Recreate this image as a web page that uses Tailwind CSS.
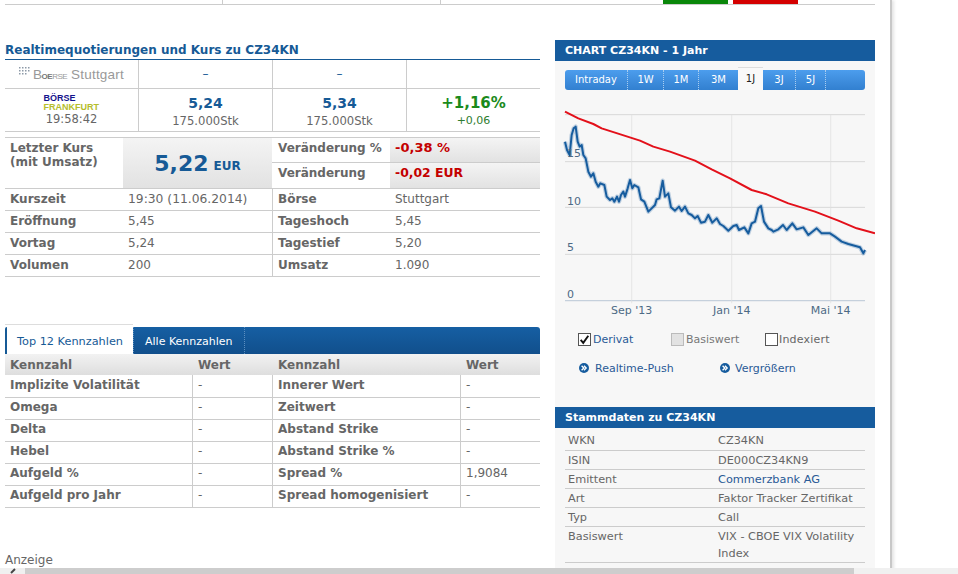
<!DOCTYPE html>
<html lang="de">
<head>
<meta charset="utf-8">
<script src="https://cdn.jsdelivr.net/npm/@tailwindcss/browser@4"></script>
</head>
<body class="bg-white">
<div class="relative w-[958px] h-[574px] overflow-hidden bg-white font-['DejaVu_Sans',Verdana,sans-serif] text-[12px] leading-none text-[#666]">
  <div class="w-[892px] h-[574px] border-r-[2px] border-[#c8c8c8] shadow-[2px_0_3px_#e4e4e4] pl-[5px] pr-[15px]">
    <!-- top strip -->
    <div class="w-[870px] h-[5px] border-b border-[#ccc] flex">
      <div class="w-[217px] h-full"></div>
      <div class="w-[218px] h-full border-l border-[#ccc]"></div>
      <div class="w-[218px] h-full border-l border-[#ccc]"></div>
      <div class="h-[4px] w-[65px] bg-[#0a870a] ml-[5px]"></div>
      <div class="h-[4px] w-[65px] bg-[#d40000] ml-[5px]"></div>
    </div>
    <div class="flex mt-[35px] gap-[15px] items-start">
      <!-- left column -->
      <div class="w-[535px]">
        <h2 class="h-[20px] pt-[4px] font-bold text-[12px] text-[#165a96] border-b-[1px] border-[#165a96]">Realtimequotierungen und Kurs zu CZ34KN</h2>
        <div class="grid grid-cols-[133px_134px_134px_134px] border-b border-[#ccc]">
          <div class="h-[29px] border-b border-[#ccc] flex items-center justify-center gap-[3px]">
            <svg width="11" height="10" viewBox="0 0 11 10" class="mb-[4px]"><g fill="#8d9aa8"><rect x="0" y="0" width="1.5" height="1.5"/><rect x="3" y="0" width="1.5" height="1.5"/><rect x="6" y="0" width="1.5" height="1.5"/><rect x="9" y="0" width="1.5" height="1.5"/><rect x="0" y="3" width="1.5" height="1.5"/><rect x="3" y="3" width="1.5" height="1.5"/><rect x="6" y="3" width="1.5" height="1.5"/><rect x="9" y="3" width="1.5" height="1.5"/><rect x="0" y="6" width="1.5" height="1.5"/><rect x="3" y="6" width="1.5" height="1.5"/><rect x="6" y="6" width="1.5" height="1.5"/></g></svg>
            <span class="font-['Liberation_Sans',sans-serif] text-[13.5px] tracking-[0.2px] text-[#999] mt-[2px]"><span class="tracking-[-0.5px]">B<span class="font-bold text-[8px] text-[#777]">OE</span><span class="text-[8px]">RSE</span></span> Stuttgart</span>
          </div>
          <div class="h-[29px] border-b border-l border-[#ccc] flex items-center justify-center text-[#165a96]">–</div>
          <div class="h-[29px] border-b border-l border-[#ccc] flex items-center justify-center text-[#165a96]">–</div>
          <div class="h-[29px] border-b border-l border-[#ccc]"></div>
          <div class="h-[42px] flex flex-col items-center pt-[5px]">
            <span class="font-['Liberation_Sans',sans-serif] font-bold text-[9px] leading-[9px] text-[#15128c] w-[56px]">BÖRSE</span>
            <span class="font-['Liberation_Sans',sans-serif] font-bold text-[9px] leading-[9px] text-[#b5bd2c] w-[56px]">FRANKFURT</span>
            <span class="mt-[1px] text-[11.5px] leading-[12px]">19:58:42</span>
          </div>
          <div class="h-[42px] border-l border-[#ccc] flex flex-col items-center pt-[7px]">
            <span class="font-bold text-[14px] text-[#165a96]">5,24</span>
            <span class="mt-[5px] text-[11.6px] leading-[12px]">175.000Stk</span>
          </div>
          <div class="h-[42px] border-l border-[#ccc] flex flex-col items-center pt-[7px]">
            <span class="font-bold text-[14px] text-[#165a96]">5,34</span>
            <span class="mt-[5px] text-[11.6px] leading-[12px]">175.000Stk</span>
          </div>
          <div class="h-[42px] border-l border-[#ccc] flex flex-col items-center pt-[7px]">
            <span class="font-bold text-[15px] leading-[14px] text-[#1b8a1b]">+1,16%</span>
            <span class="mt-[5px] text-[11px] leading-[12px] text-[#2f7d2f]">+0,06</span>
          </div>
        </div>
        <!-- Letzter Kurs -->
        <div class="mt-[5px] border-t border-b border-[#ccc] grid grid-cols-[118px_149px_118px_150px] h-[52px]">
          <div class="pl-[5px] pt-[3px] font-bold text-[#666] leading-[14px]">Letzter Kurs<br>(mit Umsatz)</div>
          <div class="bg-gradient-to-b from-[#f4f4f4] to-[#e2e2e2] flex items-center justify-center gap-[5px] pt-[2px]">
            <span class="font-bold text-[22px] text-[#165a96]">5,22</span>
            <span class="font-bold text-[12px] text-[#165a96] mt-[4px]">EUR</span>
          </div>
          <div class="flex flex-col">
            <div class="h-[25px] pl-[6px] pt-[4px] font-bold border-b border-[#ccc]">Veränderung %</div>
            <div class="pl-[6px] pt-[4px] font-bold">Veränderung</div>
          </div>
          <div class="flex flex-col">
            <div class="h-[25px] pl-[5px] pt-[4px] font-bold text-[13px] leading-[12px] text-[#c40000] bg-gradient-to-b from-[#f4f4f4] to-[#e2e2e2] border-b border-[#ccc]">-0,38 %</div>
            <div class="flex-1 pl-[5px] pt-[4px] font-bold text-[12.4px] leading-[12px] text-[#c40000] bg-gradient-to-b from-[#f4f4f4] to-[#e2e2e2]">-0,02 EUR</div>
          </div>
        </div>
        <div class="grid grid-cols-[118px_150px_117px_150px] auto-rows-[22px] items-stretch">
          <div class="pl-[5px] pt-[4px] font-bold border-b border-[#ccc]">Kurszeit</div><div class="pl-[5px] pt-[4px] border-b border-r border-[#ccc] text-[12.3px]">19:30 (11.06.2014)</div><div class="pl-[5px] pt-[4px] font-bold border-b border-[#ccc]">Börse</div><div class="pl-[5px] pt-[4px] border-b border-[#ccc]">Stuttgart</div>
          <div class="pl-[5px] pt-[4px] font-bold border-b border-[#ccc]">Eröffnung</div><div class="pl-[5px] pt-[4px] border-b border-r border-[#ccc]">5,45</div><div class="pl-[5px] pt-[4px] font-bold border-b border-[#ccc]">Tageshoch</div><div class="pl-[5px] pt-[4px] border-b border-[#ccc]">5,45</div>
          <div class="pl-[5px] pt-[4px] font-bold border-b border-[#ccc]">Vortag</div><div class="pl-[5px] pt-[4px] border-b border-r border-[#ccc]">5,24</div><div class="pl-[5px] pt-[4px] font-bold border-b border-[#ccc]">Tagestief</div><div class="pl-[5px] pt-[4px] border-b border-[#ccc]">5,20</div>
          <div class="pl-[5px] pt-[4px] font-bold border-b border-[#ccc]">Volumen</div><div class="pl-[5px] pt-[4px] border-b border-r border-[#ccc]">200</div><div class="pl-[5px] pt-[4px] font-bold border-b border-[#ccc]">Umsatz</div><div class="pl-[5px] pt-[4px] border-b border-[#ccc]">1.090</div>
        </div>
        <!-- Kennzahlen tabs -->
        <div class="mt-[47px] h-[30px] flex text-[11.3px]">
          <div class="w-[128px] h-full bg-white border-t border-[#ddd] flex items-end">
            <div class="w-full h-[27px] border-l-[2px] border-[#165a96] rounded-tl-[2px] flex items-center pl-[10px] pt-[2px] text-[#165a96]">Top 12 Kennzahlen</div>
          </div>
          <div class="flex-1 mt-[3px] h-[27px] bg-gradient-to-b from-[#165fa3] to-[#114f8c] rounded-tr-[3px] flex items-center text-white text-[11px]">
            <span class="h-full flex items-center px-[11px] pt-[2px] border-r border-l border-dotted border-[#5c8fc0]">Alle Kennzahlen</span>
          </div>
        </div>
        <div class="grid grid-cols-[188px_80px_188px_79px] auto-rows-[22px]">
          <div class="h-[21px] pl-[5px] pt-[5px] font-bold bg-gradient-to-b from-[#f2f2f2] to-[#dedede]">Kennzahl</div><div class="h-[21px] pl-[5px] pt-[5px] font-bold bg-gradient-to-b from-[#f2f2f2] to-[#dedede]">Wert</div><div class="h-[21px] pl-[5px] pt-[5px] font-bold bg-gradient-to-b from-[#f2f2f2] to-[#dedede]">Kennzahl</div><div class="h-[21px] pl-[5px] pt-[5px] font-bold bg-gradient-to-b from-[#f2f2f2] to-[#dedede]">Wert</div>
          <div class="-mt-[1px] pl-[5px] pt-[4px] font-bold border-b border-r border-[#ccc]">Implizite Volatilität</div><div class="-mt-[1px] pl-[5px] pt-[4px] border-b border-r border-[#ccc]">-</div><div class="-mt-[1px] pl-[5px] pt-[4px] font-bold border-b border-r border-[#ccc]">Innerer Wert</div><div class="-mt-[1px] pl-[5px] pt-[4px] border-b border-[#ccc]">-</div>
          <div class="-mt-[1px] pl-[5px] pt-[4px] font-bold border-b border-r border-[#ccc]">Omega</div><div class="-mt-[1px] pl-[5px] pt-[4px] border-b border-r border-[#ccc]">-</div><div class="-mt-[1px] pl-[5px] pt-[4px] font-bold border-b border-r border-[#ccc]">Zeitwert</div><div class="-mt-[1px] pl-[5px] pt-[4px] border-b border-[#ccc]">-</div>
          <div class="-mt-[1px] pl-[5px] pt-[4px] font-bold border-b border-r border-[#ccc]">Delta</div><div class="-mt-[1px] pl-[5px] pt-[4px] border-b border-r border-[#ccc]">-</div><div class="-mt-[1px] pl-[5px] pt-[4px] font-bold border-b border-r border-[#ccc]">Abstand Strike</div><div class="-mt-[1px] pl-[5px] pt-[4px] border-b border-[#ccc]">-</div>
          <div class="-mt-[1px] pl-[5px] pt-[4px] font-bold border-b border-r border-[#ccc]">Hebel</div><div class="-mt-[1px] pl-[5px] pt-[4px] border-b border-r border-[#ccc]">-</div><div class="-mt-[1px] pl-[5px] pt-[4px] font-bold border-b border-r border-[#ccc]">Abstand Strike %</div><div class="-mt-[1px] pl-[5px] pt-[4px] border-b border-[#ccc]">-</div>
          <div class="-mt-[1px] pl-[5px] pt-[4px] font-bold border-b border-r border-[#ccc]">Aufgeld %</div><div class="-mt-[1px] pl-[5px] pt-[4px] border-b border-r border-[#ccc]">-</div><div class="-mt-[1px] pl-[5px] pt-[4px] font-bold border-b border-r border-[#ccc]">Spread %</div><div class="-mt-[1px] pl-[5px] pt-[4px] border-b border-[#ccc]">1,9084</div>
          <div class="-mt-[1px] pl-[5px] pt-[4px] font-bold border-b border-r border-[#ccc]">Aufgeld pro Jahr</div><div class="-mt-[1px] pl-[5px] pt-[4px] border-b border-r border-[#ccc]">-</div><div class="-mt-[1px] pl-[5px] pt-[4px] font-bold border-b border-r border-[#ccc]">Spread homogenisiert</div><div class="-mt-[1px] pl-[5px] pt-[4px] border-b border-[#ccc]">-</div>
        </div>
        <div class="mt-[46px]">Anzeige</div>
      </div>
      <!-- right column -->
      <div class="w-[320px]">
        <div class="h-[21px] bg-[#165c9e] text-white font-bold text-[11px] flex items-center pl-[10px]">CHART CZ34KN - 1 Jahr</div>
        <div class="h-[346px] bg-[#f7f7f7] pt-[6px]">
          <div class="relative mx-[10px] h-[23px]">
            <div class="mt-[3px] h-[20px] w-[300px] rounded-[3px] flex items-center text-white text-[10px] bg-gradient-to-b from-[#4c9ded] to-[#3280d0]">
              <span class="w-[63px] text-center border-r border-dotted border-[#a9cdf0] h-full flex items-center justify-center">Intraday</span>
              <span class="w-[36px] border-r border-dotted border-[#a9cdf0] h-full flex items-center justify-center">1W</span>
              <span class="w-[35px] border-r border-dotted border-[#a9cdf0] h-full flex items-center justify-center">1M</span>
              <span class="w-[39px] h-full flex items-center justify-center">3M</span>
              <span class="w-[25px] h-[23px] -mt-[3px] bg-[#f9f9f9] border-t border-[#ddd] text-[#222] flex items-center justify-center">1J</span>
              <span class="w-[33px] border-r border-dotted border-[#a9cdf0] h-full flex items-center justify-center">3J</span>
              <span class="w-[30px] border-r border-dotted border-[#a9cdf0] h-full flex items-center justify-center">5J</span>
            </div>
          </div>
          <svg width="320" height="220" viewBox="0 0 960 660" class="block mt-[7px]">
            <g stroke="#d8d8d8" stroke-width="3" fill="none">
              <path d="M30 44H930M30 185H930M30 322H930M30 463H930" />
              <path d="M30 602H930" stroke="#c5d0dc" stroke-width="4"/>
              <path d="M230 44V610M530 44V610M827 44V610" stroke-width="2" stroke="#e0e0e0"/>
            </g>
            <polyline fill="none" stroke="#165c9e" stroke-opacity="0.25" stroke-width="13" stroke-linejoin="round" points="30,125 36,150 44,165 50,105 56,85 62,80 68,125 74,140 80,135 85,165 92,175 100,215 108,230 115,220 122,245 130,260 136,250 148,255 155,290 165,300 172,295 178,305 186,290 192,305 198,285 205,275 210,290 218,265 225,240 232,265 238,255 250,262 258,298 268,305 280,335 290,325 300,315 305,298 313,295 323,242 330,290 340,280 348,322 360,332 372,320 380,333 390,320 400,340 410,345 420,355 428,348 438,368 450,365 460,345 472,368 485,355 495,372 505,378 520,392 535,378 545,375 552,390 568,382 580,400 590,370 600,365 610,325 618,318 627,365 640,385 650,390 655,395 670,388 684,375 695,390 712,370 725,388 745,382 760,405 785,385 800,400 825,400 840,410 860,425 880,432 915,442 925,460 930,450"/>
            <polyline fill="none" stroke="#165c9e" stroke-width="6" stroke-linejoin="round" points="30,125 36,150 44,165 50,105 56,85 62,80 68,125 74,140 80,135 85,165 92,175 100,215 108,230 115,220 122,245 130,260 136,250 148,255 155,290 165,300 172,295 178,305 186,290 192,305 198,285 205,275 210,290 218,265 225,240 232,265 238,255 250,262 258,298 268,305 280,335 290,325 300,315 305,298 313,295 323,242 330,290 340,280 348,322 360,332 372,320 380,333 390,320 400,340 410,345 420,355 428,348 438,368 450,365 460,345 472,368 485,355 495,372 505,378 520,392 535,378 545,375 552,390 568,382 580,400 590,370 600,365 610,325 618,318 627,365 640,385 650,390 655,395 670,388 684,375 695,390 712,370 725,388 745,382 760,405 785,385 800,400 825,400 840,410 860,425 880,432 915,442 925,460 930,450"/>
            <polyline fill="none" stroke="#e3101a" stroke-width="6" stroke-linejoin="round" points="30,35 70,55 115,72 140,85 180,98 255,122 295,140 345,155 420,182 470,208 525,235 590,270 635,283 700,310 780,335 850,362 905,385 960,400"/>
            <g font-family="DejaVu Sans, sans-serif" font-size="33" fill="#4d6a85">
              <text x="36" y="172">15</text>
              <text x="36" y="314">10</text>
              <text x="36" y="454">5</text>
              <text x="36" y="594">0</text>
            </g>
            <g font-family="DejaVu Sans, sans-serif" font-size="33" fill="#4d6a85" text-anchor="middle">
              <text x="230" y="642">Sep '13</text>
              <text x="530" y="642">Jan '14</text>
              <text x="827" y="642">Mai '14</text>
            </g>
          </svg>
          <div class="mt-[11px] pl-[23px] flex items-center h-[16px] text-[11px]">
            <span class="w-[13px] h-[13px] border border-[#555] bg-white flex items-center justify-center">
              <svg width="13" height="13" viewBox="0 0 13 13"><path d="M2 7l3 3.5L11 2" stroke="#111" stroke-width="2.2" fill="none"/></svg>
            </span>
            <span class="text-[#2a5a96] ml-[2px] w-[41px]">Derivat</span>
            <span class="w-[13px] h-[13px] border border-[#bbb] bg-[#e2e2e2] ml-[37px]"></span>
            <span class="ml-[2px] text-[#777] w-[54px]">Basiswert</span>
            <span class="w-[13px] h-[13px] border border-[#555] bg-white ml-[25px]"></span>
            <span class="ml-[1px] text-[#666] tracking-[0.2px]">Indexiert</span>
          </div>
          <div class="mt-[13px] pl-[24px] flex items-center h-[16px] text-[#2a5a96] text-[11px]">
            <svg width="10" height="10" viewBox="0 0 10 10"><circle cx="5" cy="5" r="5" fill="#165c9e"/><path d="M2.6 2.8L4.8 5 2.6 7.2M5 2.8L7.2 5 5 7.2" stroke="#fff" stroke-width="1.3" fill="none"/></svg>
            <span class="ml-[6px] w-[80px]">Realtime-Push</span>
            <svg width="10" height="10" viewBox="0 0 10 10" class="ml-[45px]"><circle cx="5" cy="5" r="5" fill="#165c9e"/><path d="M2.6 2.8L4.8 5 2.6 7.2M5 2.8L7.2 5 5 7.2" stroke="#fff" stroke-width="1.3" fill="none"/></svg>
            <span class="ml-[5px]">Vergrößern</span>
          </div>
        </div>
        <div class="h-[21px] bg-[#165c9e] text-white font-bold text-[11px] flex items-center pl-[10px]">Stammdaten zu CZ34KN</div>
        <div class="bg-[#f7f7f7] h-[150px] px-[10px] pt-[4px] text-[11.3px]">
          <div class="grid grid-cols-[153px_147px] auto-rows-[19px]">
            <div class="pl-[3px] pt-[3px] border-b border-[#ccc]">WKN</div><div class="pt-[3px] border-b border-[#ccc]">CZ34KN</div>
            <div class="pl-[3px] pt-[4px] border-b border-[#ccc]">ISIN</div><div class="pt-[4px] border-b border-[#ccc]">DE000CZ34KN9</div>
            <div class="pl-[3px] pt-[4px] border-b border-[#ccc]">Emittent</div><div class="pt-[4px] border-b border-[#ccc] text-[#2a5a96]">Commerzbank AG</div>
            <div class="pl-[3px] pt-[4px] border-b border-[#ccc]">Art</div><div class="pt-[4px] border-b border-[#ccc]">Faktor Tracker Zertifikat</div>
            <div class="pl-[3px] pt-[4px] border-b border-[#ccc]">Typ</div><div class="pt-[4px] border-b border-[#ccc]">Call</div>
            <div class="h-[36px] pl-[3px] pt-[4px] border-b border-[#ccc]">Basiswert</div><div class="h-[36px] pt-[1px] border-b border-[#ccc] leading-[17px]">VIX - CBOE VIX Volatility Index</div>
          </div>
        </div>
      </div>
    </div>
  </div>
  <!-- horizontal scrollbar over content -->
  <div class="absolute left-0 bottom-0 w-[958px] h-[6px] flex bg-[#f0f0f0]">
    <div class="w-[25px] h-full flex items-start pl-[10px]"><svg width="6" height="6" viewBox="0 0 6 6"><path d="M5 1L1 5" stroke="#444" stroke-width="2"/></svg></div>
    <div class="w-[829px] h-full bg-[#cdcdcd]"></div>
  </div>
</div>
</body>
</html>
